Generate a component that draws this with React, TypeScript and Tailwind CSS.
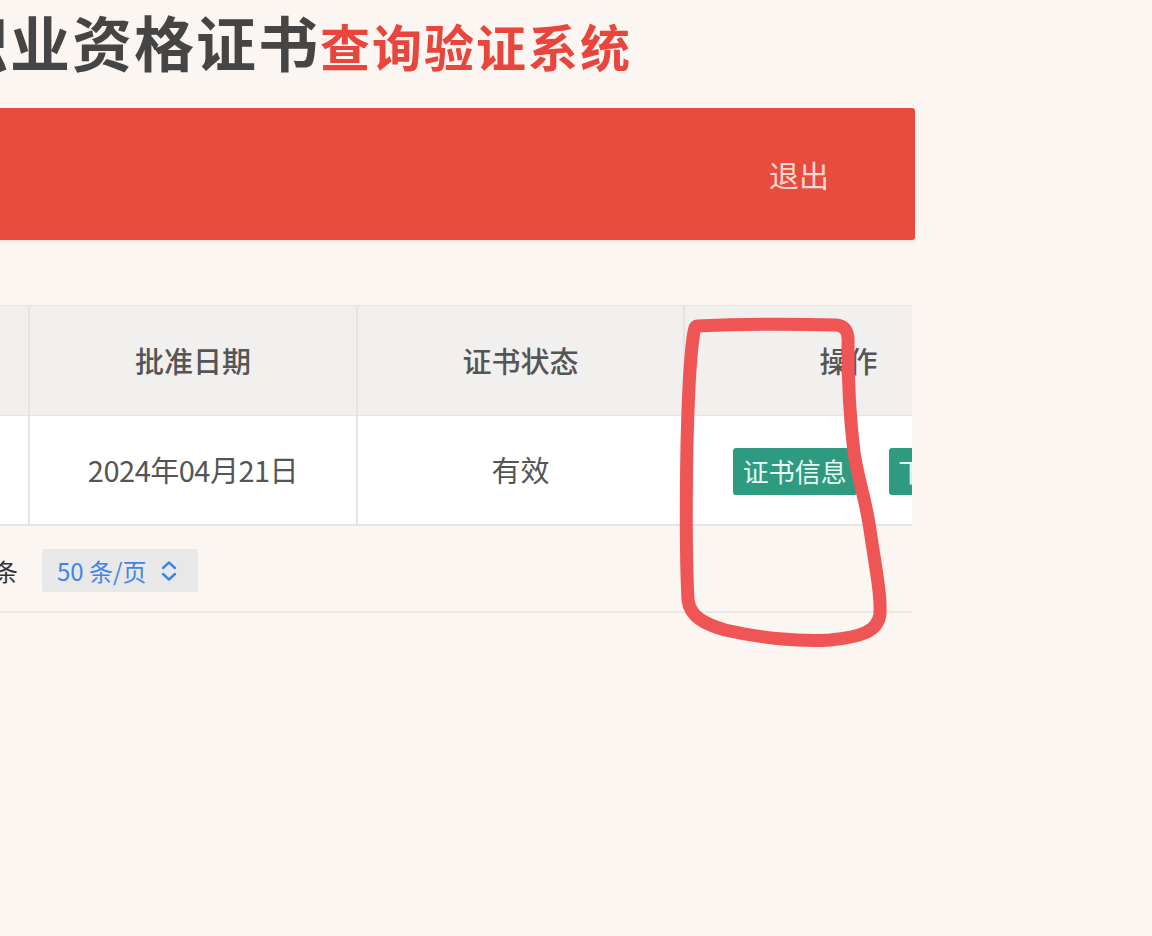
import React from "react";

const font = { fontFamily: '"Noto Sans CJK SC", "Noto Sans", sans-serif' };

export default function App() {
  return (
    <div
      className="relative w-[1152px] h-[936px] overflow-hidden bg-[#fbf6f1]"
      style={font}
    >
      <div className="w-[915px]">
        {/* Title */}
        <div className="h-[108px] flex items-baseline ml-[-52px] pt-[11px]">
          <span className="text-[60px] font-bold leading-none tracking-[2px] text-[#454545] whitespace-nowrap">
            职业资格证书
          </span>
          <span className="text-[50px] font-bold leading-none tracking-[2px] text-[#e8463c] whitespace-nowrap">
            查询验证系统
          </span>
        </div>

        {/* Red bar */}
        <div className="h-[132px] w-[915px] bg-[#e84c3f] rounded-r-[3px] flex items-center justify-end pr-[86px] shadow-[0_3px_3px_rgba(220,200,190,0.35)]">
          <span className="text-[30px] text-[#fcd9cf] leading-none">退出</span>
        </div>

        {/* Table */}
        <div className="mt-[65px] w-[912px] overflow-hidden">
          <div className="w-[1012px] grid grid-cols-[30px_328px_327px_327px] border-t border-[#e6e4e2]">
            {/* Header */}
            <div className="h-[110px] bg-[#f1f0ef] border-r-2 border-b border-[#e6e4e2]" />
            <div className="h-[110px] bg-[#f1f0ef] border-r-2 border-b border-[#e6e4e2] flex items-center justify-center text-[29px] font-medium text-[#555]">
              批准日期
            </div>
            <div className="h-[110px] bg-[#f1f0ef] border-r-2 border-b border-[#e6e4e2] flex items-center justify-center text-[29px] font-medium text-[#555]">
              证书状态
            </div>
            <div className="h-[110px] bg-[#f1f0ef] border-b border-[#e6e4e2] flex items-center justify-center text-[29px] font-medium text-[#555]">
              操作
            </div>
            {/* Body */}
            <div className="h-[110px] bg-white border-r-2 border-b-2 border-[#e6e4e2]" />
            <div className="h-[110px] bg-white border-r-2 border-b-2 border-[#e6e4e2] flex items-center justify-center text-[29px] text-[#555] tracking-[-0.5px]">
              2024年04月21日
            </div>
            <div className="h-[110px] bg-white border-r-2 border-b-2 border-[#e6e4e2] flex items-center justify-center text-[29px] text-[#555]">
              有效
            </div>
            <div className="h-[110px] bg-white border-b-2 border-[#e6e4e2] flex items-center pl-[48px] gap-[32px]">
              <div className="w-[125px] h-[47px] mt-[2px] rounded-[3px] bg-[#2e9a80] flex items-center justify-center text-[26px] text-[#eafaf4] whitespace-nowrap leading-none">
                证书信息
              </div>
              <div className="w-[125px] h-[47px] mt-[2px] rounded-[3px] bg-[#2e9a80] flex items-center justify-center text-[26px] text-[#eafaf4] whitespace-nowrap leading-none">
                下载证书
              </div>
            </div>
          </div>
        </div>

        {/* Pagination */}
        <div className="w-[912px] h-[87px] flex items-center pt-[4px] border-b-2 border-[#e9e6e3]">
          <span className="text-[24px] text-[#333] leading-none ml-[-6px]">条</span>
          <div className="ml-[24px] h-[43px] w-[156px] rounded-[3px] bg-[#e8e8e9] flex items-center pl-[15px] gap-[14px] text-[24px] text-[#3d86e6] leading-none">
            <span>50 条/页</span>
            <svg width="18" height="22" viewBox="0 0 18 22" fill="none" stroke="#3d86e6" strokeWidth="2.4" strokeLinecap="round" strokeLinejoin="round">
              <path d="M3 8 L9 2.5 L15 8" />
              <path d="M3 14 L9 19.5 L15 14" />
            </svg>
          </div>
        </div>
      </div>

      {/* Hand-drawn annotation */}
      <svg
        className="absolute left-0 top-0 pointer-events-none"
        width="1152"
        height="936"
        viewBox="0 0 1152 936"
        fill="none"
      >
        <path
          d="M697 326 C740 324 800 324 836 325 C846 326 849 332 848 345 C848 380 850 420 854 452 C858 480 866 500 870 530 C876 570 881 595 880 614 C878 632 860 637 830 640 C800 642 760 638 725 630 C705 624 690 617 688 600 C686 560 686 500 687 445 C688 400 690 360 693 338 C694 330 695 326 697 326 Z"
          stroke="#ef5555"
          strokeWidth="13"
          strokeLinecap="round"
          strokeLinejoin="round"
        />
      </svg>
    </div>
  );
}
